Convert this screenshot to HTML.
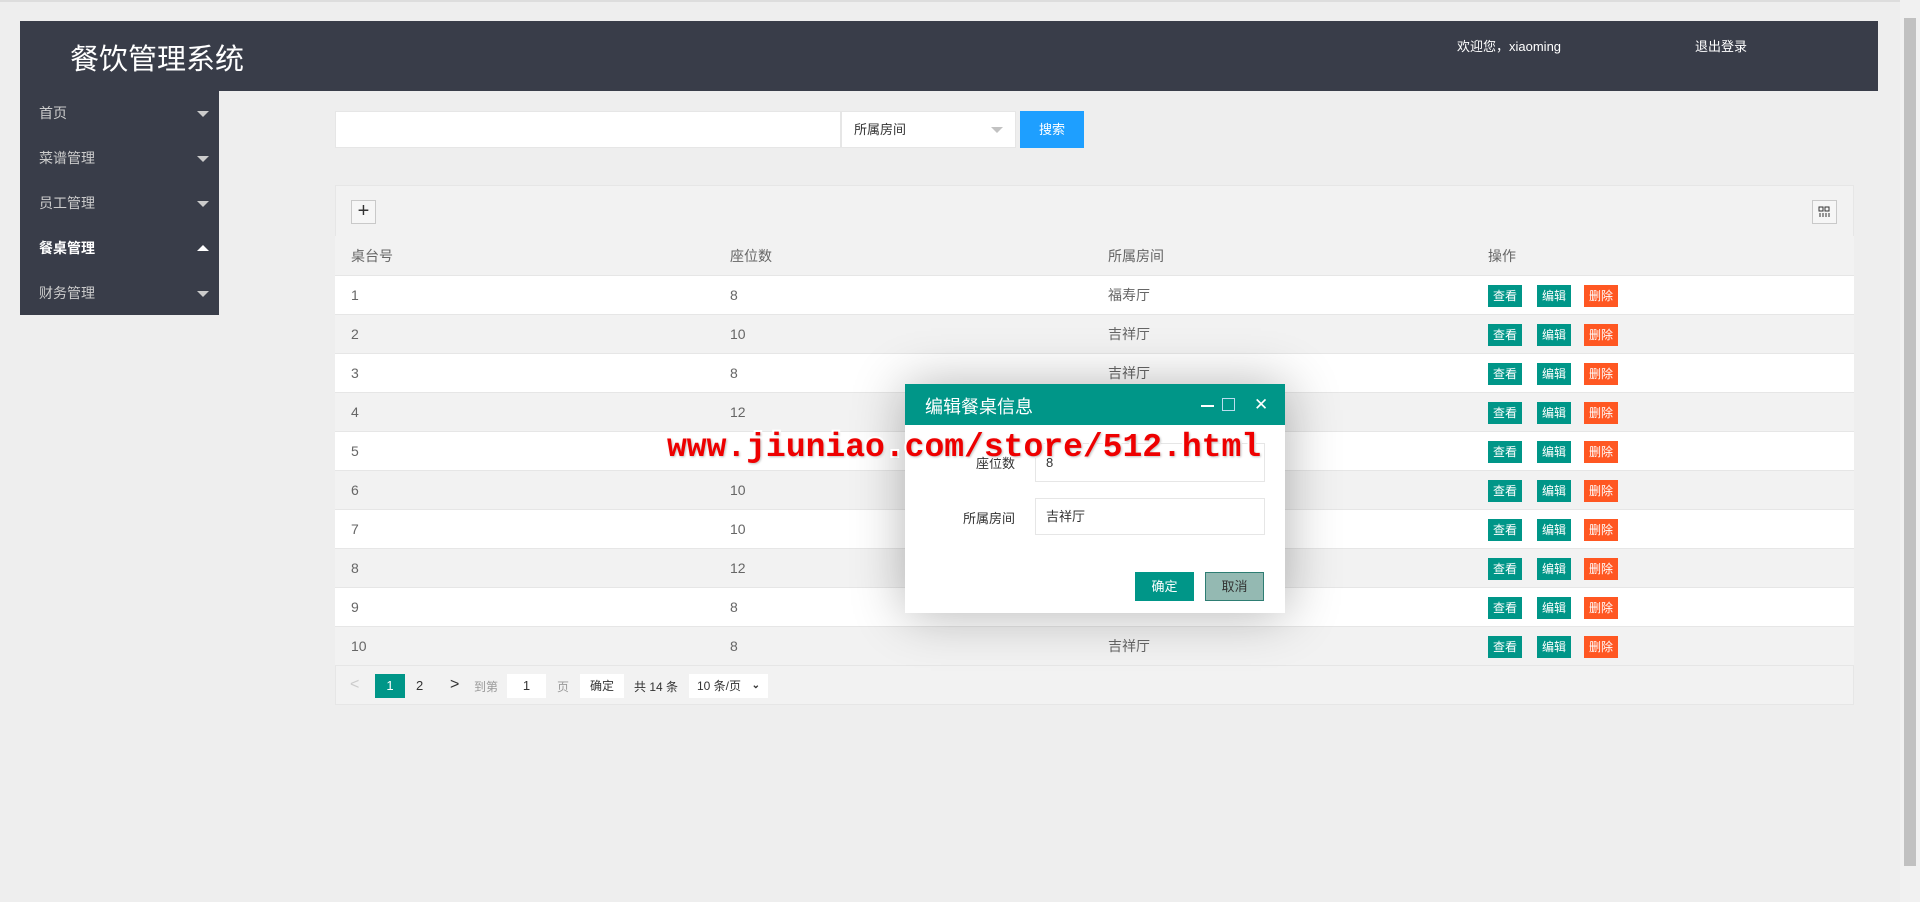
<!DOCTYPE html>
<html><head><meta charset="utf-8"><style>
*{box-sizing:border-box;margin:0;padding:0}
body{width:1920px;height:902px;background:#eee;font-family:"Liberation Sans","Noto Sans CJK SC",sans-serif;position:relative;overflow:hidden;color:#666;font-size:14px}
.abs{position:absolute}
.hdr{left:20px;top:21px;width:1858px;height:70px;background:#393d49}
.side{left:20px;top:91px;width:199px;height:224px;background:#393d49}
.side div{height:45px;line-height:45px;padding-left:19px;color:#ccc;font-size:14px;position:relative}
.side div:after{content:"";position:absolute;right:10px;top:20px;border:6px solid transparent;border-top-color:#ccc;border-bottom:0}
.side div.on{color:#fff;font-weight:bold}
.side div.on:after{border-top:0;border-bottom:6px solid #fff;top:19px}
.row{position:absolute;left:335px;width:1519px;height:39px;line-height:39px;border-bottom:1px solid #e6e6e6}
.row span{position:absolute;top:0}
.row i{font-style:normal}
.b{position:absolute;top:9px;height:22px;line-height:22px;width:34px;text-align:center;color:#fff;font-size:12px;background:#009688}
.b.r{background:#ff5722}
.wm{left:667px;top:429px;font-family:"Liberation Mono",monospace;font-weight:bold;font-size:33px;color:#e00;-webkit-text-stroke:4px #fff;paint-order:stroke fill;white-space:nowrap;text-shadow:1px 1px 2px rgba(0,0,0,.25)}
</style></head><body>
<div class="abs" style="left:0;top:0;width:1900px;height:2px;background:#ddd"></div>
<div class="abs" style="left:1900px;top:0;width:20px;height:902px;background:#f1f1f1"></div>
<div class="abs" style="left:1904px;top:18px;width:12px;height:848px;background:#c1c1c1"></div>
<div class="abs hdr"></div>
<div class="abs" style="left:70px;top:36px;font-size:29px;color:#fff">餐饮管理系统</div>
<div class="abs" style="left:1457px;top:36px;font-size:13px;color:#fff">欢迎您，xiaoming</div>
<div class="abs" style="left:1695px;top:36px;font-size:13px;color:#fff">退出登录</div>
<div class="abs side"><div>首页</div><div>菜谱管理</div><div>员工管理</div><div class="on">餐桌管理</div><div>财务管理</div></div>

<div class="abs" style="left:335px;top:111px;width:506px;height:37px;background:#fff;border:1px solid #e6e6e6"></div>
<div class="abs" style="left:841px;top:111px;width:175px;height:37px;background:#fff;border:1px solid #e6e6e6;line-height:35px;padding-left:12px;color:#333;font-size:13px">所属房间<span style="position:absolute;right:12px;top:15px;border:6px solid transparent;border-top-color:#c2c2c2;border-bottom:0"></span></div>
<div class="abs" style="left:1020px;top:111px;width:64px;height:37px;background:#1e9fff;color:#fff;line-height:37px;text-align:center;font-size:13px">搜索</div>

<div class="abs" style="left:335px;top:185px;width:1519px;height:520px;background:#f2f2f2;border:1px solid #e6e6e6"></div>
<div class="abs" style="left:351px;top:200px;width:25px;height:24px;border:1px solid #c9c9c9;background:#f6f6f6;text-align:center;line-height:21px;font-size:20px;color:#333">+</div>
<div class="abs" style="left:1812px;top:200px;width:25px;height:24px;border:1px solid #c9c9c9;background:#f6f6f6"><svg width="23" height="22"><rect x="6" y="6" width="4" height="4" fill="none" stroke="#333"/><rect x="12" y="6" width="4" height="4" fill="none" stroke="#333"/><path d="M7 12v4M10 12v4M13 12v4M16 12v4" stroke="#333"/></svg></div>
<div class="row" style="top:236px;height:40px;background:#f2f2f2;line-height:40px;color:#666"><span style="left:16px">桌台号</span><span style="left:395px">座位数</span><span style="left:773px">所属房间</span><span style="left:1153px">操作</span></div>

<div id="rows"></div>
<script>
var d=[[1,8,"福寿厅"],[2,10,"吉祥厅"],[3,8,"吉祥厅"],[4,12,""],[5,"",""],[6,10,""],[7,10,""],[8,12,""],[9,8,""],[10,8,"吉祥厅"]];
var h="";d.forEach(function(r,i){h+='<div class="row" style="top:'+(276+i*39)+'px;background:'+(i%2?'#f2f2f2':'#fff')+'"><span style="left:16px">'+r[0]+'</span><span style="left:395px">'+r[1]+'</span><span style="left:773px">'+r[2]+'</span><i class="b" style="left:1153px">查看</i><i class="b" style="left:1202px">编辑</i><i class="b r" style="left:1249px">删除</i></div>'});
document.getElementById("rows").innerHTML=h;
</script>

<div class="abs" style="left:350px;top:676px;color:#ccc;font-size:16px">&lt;</div>
<div class="abs" style="left:375px;top:674px;width:30px;height:24px;background:#009688;color:#fff;text-align:center;line-height:24px;font-size:13px">1</div>
<div class="abs" style="left:416px;top:678px;font-size:13px;color:#333">2</div>
<div class="abs" style="left:450px;top:676px;font-size:16px;color:#333">&gt;</div>
<div class="abs" style="left:474px;top:678px;font-size:12px;color:#999">到第</div>
<div class="abs" style="left:507px;top:674px;width:39px;height:24px;background:#fff;text-align:center;line-height:24px;font-size:13px;color:#333">1</div>
<div class="abs" style="left:557px;top:678px;font-size:12px;color:#999">页</div>
<div class="abs" style="left:580px;top:674px;width:44px;height:24px;background:#fff;text-align:center;line-height:24px;font-size:12px;color:#333">确定</div>
<div class="abs" style="left:634px;top:678px;font-size:12px;color:#333">共 14 条</div>
<div class="abs" style="left:689px;top:674px;width:79px;height:24px;background:#fff;line-height:24px;padding-left:8px;font-size:12px;color:#333">10 条/页 <b style="position:absolute;right:8px;font-size:10px">⌄</b></div>

<div class="abs" style="left:905px;top:384px;width:380px;height:229px;background:#fff;box-shadow:1px 1px 50px rgba(0,0,0,.3)"></div>
<div class="abs" style="left:905px;top:384px;width:380px;height:41px;background:#009688"></div>
<div class="abs" style="left:925px;top:393px;font-size:18px;color:#fff">编辑餐桌信息</div>
<div class="abs" style="left:1201px;top:405px;width:13px;height:2px;background:#fff"></div>
<div class="abs" style="left:1222px;top:398px;width:13px;height:13px;border:1px solid #bde"></div>
<div class="abs" style="left:1254px;top:395px;color:#fff;font-size:17px">✕</div>
<div class="abs" style="left:976px;top:453px;font-size:13px;color:#333">座位数</div>
<div class="abs" style="left:1035px;top:443px;width:230px;height:39px;border:1px solid #e6e6e6;padding-left:10px;line-height:37px;font-size:13px;color:#333">8</div>
<div class="abs" style="left:963px;top:508px;font-size:13px;color:#333">所属房间</div>
<div class="abs" style="left:1035px;top:498px;width:230px;height:37px;border:1px solid #e6e6e6;padding-left:10px;line-height:35px;font-size:13px;color:#333">吉祥厅</div>
<div class="abs" style="left:1135px;top:572px;width:59px;height:29px;background:#009688;color:#fff;text-align:center;line-height:29px;font-size:13px">确定</div>
<div class="abs" style="left:1205px;top:572px;width:59px;height:29px;background:#94b9b2;border:1px solid #2e7d73;color:#333;text-align:center;line-height:27px;font-size:13px">取消</div>

<div class="abs wm">www.jiuniao.com/store/512.html</div>
</body></html>
